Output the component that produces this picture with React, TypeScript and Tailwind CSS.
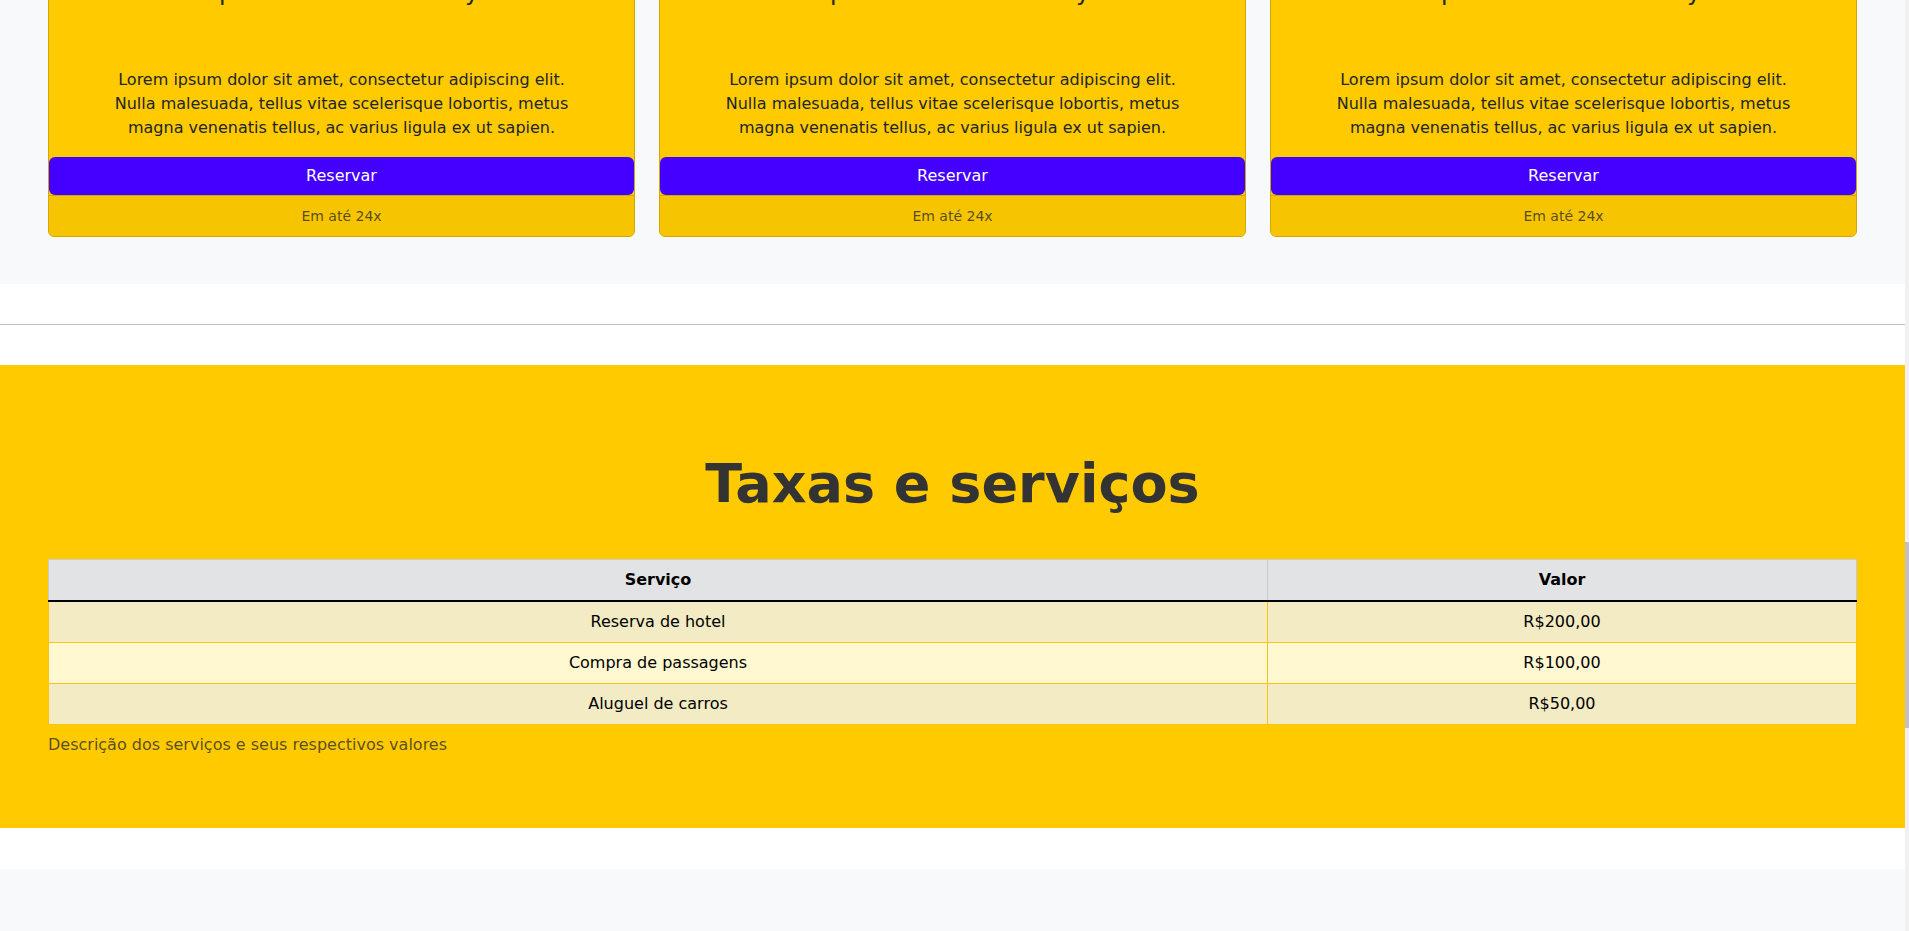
const packages = [1, 2, 3]

const services = [
  { name: 'Reserva de hotel', price: 'R$200,00' },
  { name: 'Compra de passagens', price: 'R$100,00' },
  { name: 'Aluguel de carros', price: 'R$50,00' },
]

function PackageCard() {
  return (
    <div className="flex flex-col rounded-md border border-[#d2a700] bg-[#ffca00] overflow-hidden">
      <div className="px-4 pt-4 text-center">
        <h3 className="text-[24px] leading-[1.2] mb-[61px]">Spa e resort em Paraty</h3>
        <p className="mx-auto max-w-[470px] text-base leading-6 mb-[17px]">
          Lorem ipsum dolor sit amet, consectetur adipiscing elit. Nulla malesuada, tellus vitae
          scelerisque lobortis, metus magna venenatis tellus, ac varius ligula ex ut sapien.
        </p>
      </div>
      <button className="h-[38px] rounded-md bg-[#4400ff] text-base text-white">Reservar</button>
      <div className="border-t border-[#d2a700] bg-[#f6c400] py-2 text-center text-sm leading-6 text-[#212529]/75">
        Em até 24x
      </div>
    </div>
  )
}

export default function App() {
  return (
    <div className="flex h-[931px] overflow-hidden bg-white font-['DejaVu_Sans',sans-serif] text-[#212529]">
      <div className="flex flex-1 flex-col">
        <section className="-mt-[87px] bg-[#f8f9fa] px-12 pt-12 pb-[47px]">
          <div className="grid grid-cols-3 gap-6">
            {packages.map((p) => (
              <PackageCard key={p} />
            ))}
          </div>
        </section>

        <div className="py-10">
          <hr className="border-t border-[#c0c0c0]" />
        </div>

        <section className="bg-[#ffca00] px-12 pt-[87px] pb-[63px]">
          <h1 className="mb-[42px] text-center text-[54px] font-bold leading-[1.2] text-[#333]">
            Taxas e serviços
          </h1>
          <table className="w-full border-collapse text-base leading-6 text-black">
            <caption className="caption-bottom py-2 text-left text-[#212529]/75">
              Descrição dos serviços e seus respectivos valores
            </caption>
            <thead>
              <tr className="bg-[#e2e3e5]">
                <th className="w-[1219px] border border-[#c8c9cb] border-b-2 border-b-black px-2 py-2 font-bold">
                  Serviço
                </th>
                <th className="border border-[#c8c9cb] border-b-2 border-b-black px-2 py-2 font-bold">
                  Valor
                </th>
              </tr>
            </thead>
            <tbody>
              {services.map((s, i) => (
                <tr key={s.name} className={i % 2 === 0 ? 'bg-[#f2ebc3]' : 'bg-[#fff8d0]'}>
                  <td className="border border-[#f7c31a] px-2 py-2 text-center">{s.name}</td>
                  <td className="border border-[#f7c31a] px-2 py-2 text-center">{s.price}</td>
                </tr>
              ))}
            </tbody>
          </table>
        </section>

        <div className="h-[41px] shrink-0" />
        <div className="flex-1 bg-[#f8f9fa]" />
      </div>

      <div className="w-1 shrink-0 bg-[#f1f1f1]">
        <div className="mt-[542px] h-[186px] bg-[#c1c1c1]" />
      </div>
    </div>
  )
}
